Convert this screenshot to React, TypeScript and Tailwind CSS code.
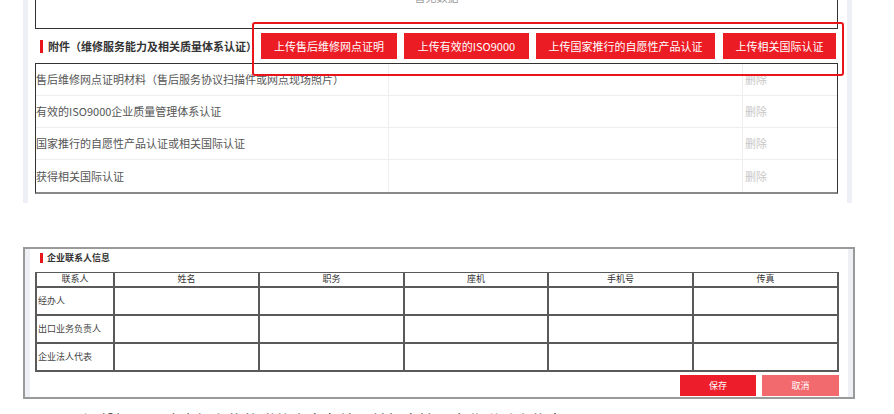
import React from "react";

const rows = [
  "售后维修网点证明材料（售后服务协议扫描件或网点现场照片）",
  "有效的ISO9000企业质量管理体系认证",
  "国家推行的自愿性产品认证或相关国际认证",
  "获得相关国际认证",
];

const contacts = ["经办人", "出口业务负责人", "企业法人代表"];
const headers = ["联系人", "姓名", "职务", "座机", "手机号", "传真"];

export default function App() {
  return (
    <div className="w-[894px] h-[414px] overflow-hidden bg-white font-['Noto_Sans_CJK_SC','Noto_Sans',sans-serif]">
      {/* top section */}
      <div className="flex ml-[23px] w-[829px] h-[203px]">
        <div className="w-[5px] bg-[#eef0f5]" />
        <div className="flex-1 pl-[7px] pr-[9px] relative">
          <div className="h-[29px] border-x border-b border-[#333] flex justify-center">
            <span className="-mt-[10px] text-[11px] leading-[14px] text-[#999]">暂无数据</span>
          </div>
          <div className="h-[34px] flex items-center">
            <div className="ml-[5px] w-[3px] h-[13px] bg-[#e8151b]" />
            <span className="ml-[5px] text-[11px] font-bold text-[#333]">附件（维修服务能力及相关质量体系认证）</span>
            <div className="ml-auto mr-[2px] flex gap-[7px]">
              <button className="w-[136px] h-[26px] bg-[#ec1c24] text-white text-[11px] flex items-center justify-center">上传售后维修网点证明</button>
              <button className="w-[125px] h-[26px] bg-[#ec1c24] text-white text-[11px] flex items-center justify-center">上传有效的ISO9000</button>
              <button className="w-[179px] h-[26px] bg-[#ec1c24] text-white text-[11px] flex items-center justify-center">上传国家推行的自愿性产品认证</button>
              <button className="ml-[1px] w-[113px] h-[26px] bg-[#ec1c24] text-white text-[11px] flex items-center justify-center">上传相关国际认证</button>
            </div>
          </div>
          <div className="border-x border-t border-[#333] border-b-2 border-b-[#888]">
            {rows.map((r, i) => (
              <div
                key={r}
                className={`grid grid-cols-[352px_354px_1fr] h-[32px] ${i < 3 ? "border-b border-[#eee]" : "h-[31px]"}`}
              >
                <div className="flex items-center text-[11px] text-[#555] whitespace-nowrap">{r}</div>
                <div className="border-l border-[#eee]" />
                <div className="border-l border-[#eee] flex items-center pl-[2px] text-[11px] text-[#c8c8c8]">删除</div>
              </div>
            ))}
          </div>
          {/* annotation highlight */}
          <div className="absolute left-[224px] top-[22px] w-[592px] h-[54px] border-2 border-[#e8151b] rounded-[3px] pointer-events-none" />
        </div>
        <div className="w-[5px] bg-[#eef0f5]" />
      </div>

      {/* bottom section */}
      <div className="mt-[44px] ml-[23px] w-[832px] h-[152px] border-2 border-[#9a9a9a] flex">
        <div className="w-[5px] bg-[#eef0f5]" />
        <div className="flex-1 flex flex-col">
          <div className="h-[23px] flex items-start pt-[4px]">
            <div className="ml-[10px] w-[3px] h-[10px] bg-[#e8151b]" />
            <span className="ml-[4px] text-[9px] leading-[10px] font-bold text-[#333]">企业联系人信息</span>
          </div>
          <table className="ml-[5px] w-[802px] table-fixed border-collapse">
            <colgroup>
              <col className="w-[78px]" />
              <col className="w-[145px]" />
              <col className="w-[145px]" />
              <col className="w-[144px]" />
              <col className="w-[145px]" />
              <col className="w-[145px]" />
            </colgroup>
            <thead>
              <tr className="h-[14px]">
                {headers.map((h) => (
                  <th
                    key={h}
                    className="border-x-2 border-b-2 border-t border-[#5a5a5a] p-0 text-[9px] leading-[10px] font-normal text-[#333] text-center"
                  >
                    {h}
                  </th>
                ))}
              </tr>
            </thead>
            <tbody>
              {contacts.map((c) => (
                <tr key={c} className="h-[28px]">
                  <td className="border-2 border-[#5a5a5a] p-0 pl-[1px] text-[9px] text-[#444] whitespace-nowrap">{c}</td>
                  <td className="border-2 border-[#5a5a5a] p-0" />
                  <td className="border-2 border-[#5a5a5a] p-0" />
                  <td className="border-2 border-[#5a5a5a] p-0" />
                  <td className="border-2 border-[#5a5a5a] p-0" />
                  <td className="border-2 border-[#5a5a5a] p-0" />
                </tr>
              ))}
            </tbody>
          </table>
          <div className="mt-[3px] mr-[9px] flex justify-end gap-[6px]">
            <button className="w-[76px] h-[21px] bg-[#ee1d2b] text-white text-[9px] flex items-end justify-center pb-[3px]">保存</button>
            <button className="w-[77px] h-[21px] bg-[#f26a6e] text-white text-[9px] flex items-end justify-center pb-[3px]">取消</button>
          </div>
        </div>
        <div className="w-[5px] bg-[#eef0f5]" />
      </div>

      <div className="mt-[13px] ml-[83px] text-[16px] leading-[16px] text-[#333] whitespace-nowrap">
        温馨提示：请确保上传的附件真实有效，并如实填写企业联系人信息。
      </div>
    </div>
  );
}
